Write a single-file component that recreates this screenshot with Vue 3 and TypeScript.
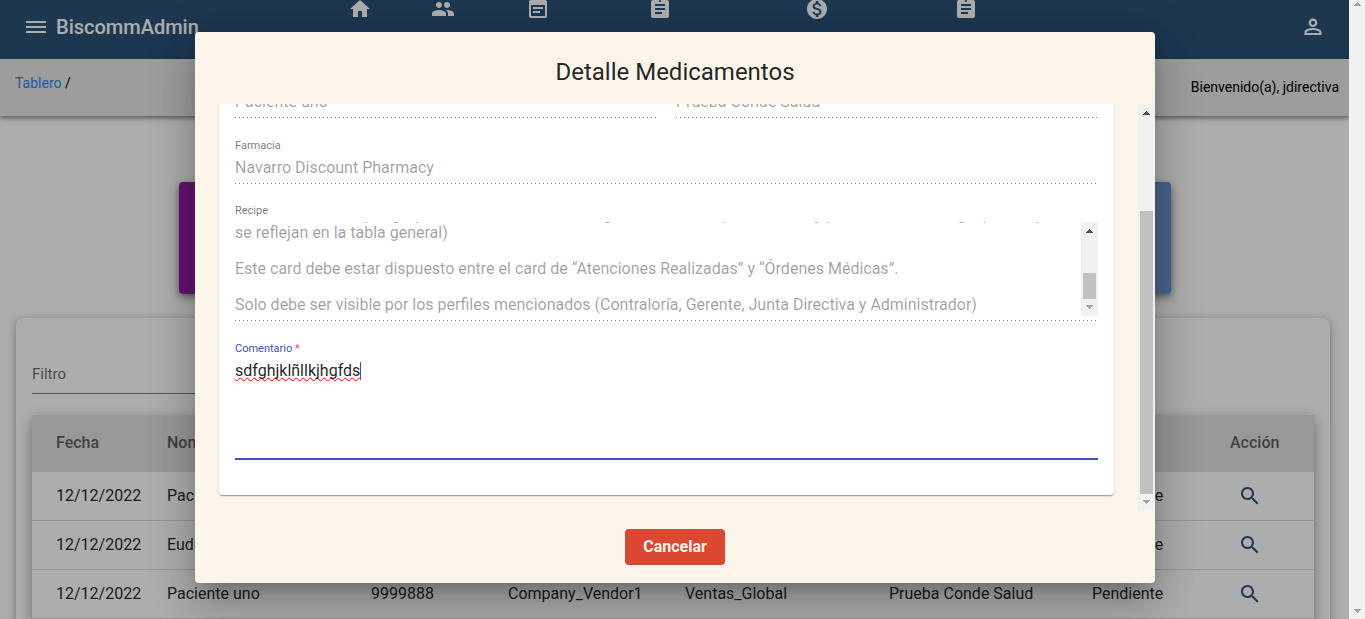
<script setup lang="ts">
import { computed, nextTick, onMounted, ref } from 'vue'

interface NavItem { name: string; path: string }
interface Order {
  date: string
  patient: string
  code: string
  company: string
  group: string
  plan: string
  status: string
}

const clipboard = 'M19 3h-4.18C14.4 1.84 13.3 1 12 1c-1.3 0-2.4.84-2.82 2H5c-1.1 0-2 .9-2 2v14c0 1.1.9 2 2 2h14c1.1 0 2-.9 2-2V5c0-1.100-.9-2-2-2zm-7 0c.55 0 1 .45 1 1s-.45 1-1 1-1-.45-1-1 .45-1 1-1zm2 14H7v-2h7v2zm3-4H7v-2h10v2zm0-4H7V7h10v2z'

const navItems: NavItem[] = [
  { name: 'Inicio', path: 'M10 20v-6h4v6h5v-8h3L12 3 2 12h3v8z' },
  { name: 'Usuarios', path: 'M16 11c1.66 0 2.990-1.340 2.990-3S17.660 5 16 5c-1.660 0-3 1.340-3 3s1.340 3 3 3zm-8 0c1.660 0 2.990-1.340 2.990-3S9.660 5 8 5C6.340 5 5 6.340 5 8s1.340 3 3 3zm0 2c-2.330 0-7 1.170-7 3.500V19h14v-2.500c0-2.330-4.670-3.500-7-3.500zm8 0c-.290 0-.620.020-.970.050 1.160.840 1.970 1.970 1.970 3.450V19h6v-2.500c0-2.330-4.670-3.500-7-3.500z' },
  { name: 'Citas', path: 'M17 10H7v2h10v-2zm2-7h-1V1h-2v2H8V1H6v2H5c-1.110 0-2 .9-2 2v14c0 1.100.890 2 2 2h14c1.100 0 2-.9 2-2V5c0-1.100-.9-2-2-2zm0 16H5V8h14v11zm-5-5H7v2h7v-2z' },
  { name: 'Atenciones', path: clipboard },
  { name: 'Pagos', path: 'M12 2C6.480 2 2 6.480 2 12s4.480 10 10 10 10-4.480 10-10S17.520 2 12 2zm1.410 16.090V20h-2.670v-1.930c-1.710-.360-3.160-1.460-3.270-3.400h1.960c.1 1.050.820 1.870 2.650 1.870 1.960 0 2.400-.980 2.400-1.590 0-.830-.440-1.610-2.670-2.140-2.480-.6-4.180-1.620-4.180-3.670 0-1.720 1.390-2.840 3.110-3.210V4h2.670v1.950c1.860.450 2.790 1.860 2.850 3.390H14.300c-.050-1.110-.640-1.870-2.220-1.870-1.500 0-2.400.680-2.400 1.640 0 .840.650 1.390 2.670 1.910s4.180 1.390 4.180 3.910c-.010 1.830-1.380 2.830-3.120 3.160z' },
  { name: 'Reportes', path: clipboard },
]

const headings = ['Fecha', 'Nombre', 'Código', 'Compañía', 'Grupo', 'Plan', 'Estatus', 'Acción']

function order(patient: string): Order {
  return {
    date: '12/12/2022',
    patient,
    code: '9999888',
    company: 'Company_Vendor1',
    group: 'Ventas_Global',
    plan: 'Prueba Conde Salud',
    status: 'Pendiente',
  }
}
const orders = [order('Paciente uno'), order('Eudis'), order('Paciente uno')]

const recipe = [
  'Card para la contraloría.',
  'Se debe agregar un card de medicamentos en el tablero principal.',
  '',
  'El card debe mostrar el total de los medicamentos pendientes.',
  'Al seleccionar el card se despliega la tabla con el detalle.',
  '',
  'Esta tabla se verá por grupo, desde cada vista del registro con datos por estados, y para el total de cargo, por el tipo',
  'se reflejan en la tabla general)',
  '',
  'Este card debe estar dispuesto entre el card de “Atenciones Realizadas” y “Órdenes Médicas”.',
  '',
  'Solo debe ser visible por los perfiles mencionados (Contraloría, Gerente, Junta Directiva y Administrador)',
].join('\n')

const comment = ref('sdfghjklñllkjhgfds')
const recipeBox = ref<HTMLTextAreaElement | null>(null)
const ready = ref(false)

const caretX = computed(() => {
  if (!ready.value) return 0
  const context = document.createElement('canvas').getContext('2d')
  if (!context) return 0
  context.font = '16px Roboto'
  return Math.round(context.measureText(comment.value).width)
})

onMounted(async () => {
  await nextTick()
  ready.value = true
  if (recipeBox.value) recipeBox.value.scrollTop = recipeBox.value.scrollHeight
})
</script>

<template>
  <div class="window">
    <div class="page">
      <header class="toolbar">
        <div class="brand">
          <button class="icon-button" type="button" aria-label="Menú">
            <svg viewBox="0 0 24 24"><path d="M2 6h20v2H2zm0 5h20v2H2zm0 5h20v2H2z" /></svg>
          </button>
          <span class="brand-name">BiscommAdmin</span>
        </div>
        <nav class="nav">
          <button v-for="item in navItems" :key="item.name" class="nav-item" type="button" :aria-label="item.name">
            <svg viewBox="0 0 24 24"><path :d="item.path" /></svg>
          </button>
        </nav>
        <button class="icon-button account" type="button" aria-label="Cuenta">
          <svg viewBox="0 0 24 24"><path fill-rule="evenodd" d="M12 3.500a4.300 4.300 0 1 1 0 8.600 4.300 4.300 0 0 1 0-8.600zm0 2.200a2.100 2.100 0 1 0 0 4.200 2.100 2.100 0 0 0 0-4.200zM12 13c-2.700 0-8.500 1.300-8.500 4v3h17v-3c0-2.700-5.800-4-8.500-4zm0 2.100c2.800 0 6.100 1.200 6.400 2.100v.7H5.600v-.7c.3-.9 3.600-2.100 6.400-2.100z" /></svg>
        </button>
      </header>

      <div class="subbar">
        <div class="crumbs"><a href="#">Tablero</a> /</div>
        <div class="welcome">Bienvenido(a), jdirectiva</div>
      </div>

      <section class="tiles">
        <div class="tile purple"></div>
        <div class="tile blue"></div>
      </section>

      <main class="panel">
        <input class="filter" type="text" placeholder="Filtro" aria-label="Filtro" />
        <table class="orders">
          <colgroup>
            <col class="c-date" /><col class="c-patient" /><col class="c-code" /><col class="c-company" />
            <col class="c-group" /><col class="c-plan" /><col class="c-status" /><col class="c-action" />
          </colgroup>
          <thead>
            <tr><th v-for="heading in headings" :key="heading">{{ heading }}</th></tr>
          </thead>
          <tbody>
            <tr v-for="(row, index) in orders" :key="index">
              <td>{{ row.date }}</td>
              <td>{{ row.patient }}</td>
              <td>{{ row.code }}</td>
              <td>{{ row.company }}</td>
              <td>{{ row.group }}</td>
              <td>{{ row.plan }}</td>
              <td>{{ row.status }}</td>
              <td>
                <button class="search" type="button" aria-label="Ver detalle">
                  <svg viewBox="0 0 24 24"><path d="M15.500 14h-.790l-.280-.270C15.410 12.590 16 11.110 16 9.500 16 5.910 13.090 3 9.500 3S3 5.910 3 9.500 5.910 16 9.500 16c1.610 0 3.090-.590 4.230-1.570l.270.280v.790l5 4.990L20.490 19l-4.990-5zm-6 0C7.010 14 5 11.990 5 9.500S7.010 5 9.500 5 14 7.010 14 9.500 11.990 14 9.500 14z" /></svg>
                </button>
              </td>
            </tr>
          </tbody>
        </table>
      </main>
    </div>

    <div class="backdrop">
      <div class="dialog" role="dialog" aria-modal="true" aria-labelledby="dialog-title">
        <h1 id="dialog-title" class="dialog-title">Detalle Medicamentos</h1>
        <div class="dialog-body">
          <div class="scroll-area">
            <form class="card" @submit.prevent>
              <div class="pair">
                <div class="field">
                  <label for="patient">Paciente</label>
                  <input id="patient" type="text" value="Paciente uno" disabled />
                </div>
                <div class="field">
                  <label for="plan">Plan</label>
                  <input id="plan" type="text" value="Prueba Conde Salud" disabled />
                </div>
              </div>
              <div class="field">
                <label for="pharmacy">Farmacia</label>
                <input id="pharmacy" type="text" value="Navarro Discount Pharmacy" disabled />
              </div>
              <div class="field area">
                <label for="recipe">Recipe</label>
                <div class="recipe-row">
                  <textarea id="recipe" ref="recipeBox" :value="recipe" disabled></textarea>
                  <div class="scrollbar">
                    <svg class="arrow dark" viewBox="0 0 7 4"><path d="M3 0h1v1h1v1h1v1h1v1H0V3h1V2h1V1h1z" /></svg>
                    <div class="track recipe-track"><div class="thumb"></div></div>
                    <svg class="arrow" viewBox="0 0 7 4"><path d="M0 0h7v1H6v1H5v1H4v1H3V3H2V2H1V1H0z" /></svg>
                  </div>
                </div>
              </div>
              <div class="field active">
                <label for="comment">Comentario <span class="required">*</span></label>
                <div class="comment-row">
                  <textarea id="comment" v-model="comment" spellcheck="false" required></textarea>
                  <span class="caret" :style="{ left: caretX + 'px' }"></span>
                </div>
              </div>
            </form>
          </div>
          <div class="scrollbar">
            <svg class="arrow dark" viewBox="0 0 7 4"><path d="M3 0h1v1h1v1h1v1h1v1H0V3h1V2h1V1h1z" /></svg>
            <div class="track body-track"><div class="thumb"></div></div>
            <svg class="arrow" viewBox="0 0 7 4"><path d="M0 0h7v1H6v1H5v1H4v1H3V3H2V2H1V1H0z" /></svg>
          </div>
        </div>
        <div class="dialog-actions">
          <button class="cancel" type="button">Cancelar</button>
        </div>
      </div>
    </div>

    <div class="scrollbar page-scrollbar">
      <svg class="arrow" viewBox="0 0 7 4"><path d="M3 0h1v1h1v1h1v1h1v1H0V3h1V2h1V1h1z" /></svg>
      <div class="track"></div>
      <svg class="arrow" viewBox="0 0 7 4"><path d="M0 0h7v1H6v1H5v1H4v1H3V3H2V2H1V1H0z" /></svg>
    </div>
  </div>
</template>

<style>
body {
  margin: 0;
  overflow: hidden;
}
</style>

<style scoped>
.window {
  position: relative;
  height: 100vh;
  overflow: hidden;
  background: #fff;
  color: rgba(0, 0, 0, 0.87);
  font-family: Roboto, "Liberation Sans", sans-serif;
  font-size: 16px;
}
.window *,
.window *::before {
  box-sizing: border-box;
}
button,
input,
textarea {
  margin: 0;
  padding: 0;
  border: 0;
  border-radius: 0;
  outline: 0;
  background: none;
  color: inherit;
  font: inherit;
}
svg {
  display: block;
  width: 24px;
  height: 24px;
  fill: currentColor;
}
.page {
  margin-right: 16px;
}

.toolbar {
  display: flex;
  align-items: center;
  height: 59px;
  padding: 0 24px 5px;
  background: #2c5278;
  color: #fff;
}
.brand {
  display: flex;
  align-items: center;
  gap: 8px;
  width: 298px;
}
.brand-name {
  font-size: 20px;
  font-weight: 500;
  line-height: 24px;
}
.nav {
  display: grid;
  grid-template-columns: 76px 90px 100px 144px 170px 128px;
  height: 60px;
}
.nav-item {
  display: flex;
  justify-content: center;
  align-items: flex-start;
}
.account {
  margin-left: auto;
}

.subbar {
  position: relative;
  display: flex;
  justify-content: space-between;
  height: 57px;
  padding: 15px 10px 0 15px;
  background: #e7e7e7;
  box-shadow: 0 2px 5px rgba(0, 0, 0, 0.5);
  color: #000;
  font-size: 14px;
  line-height: 18px;
}
.crumbs a {
  color: #2a86f5;
  text-decoration: none;
}
.welcome {
  padding-top: 4px;
}

.tiles {
  display: flex;
  justify-content: space-between;
  padding: 66px 178px 24px 179px;
}
.tile {
  width: 230px;
  height: 112px;
  border-radius: 4px;
  box-shadow: 0 3px 8px rgba(0, 0, 0, 0.5);
}
.purple {
  background: #931da2;
}
.blue {
  background: #6d92d2;
}

.panel {
  margin: 0 19px 0 16px;
  height: 400px;
  padding: 36px 16px 16px;
  border-radius: 8px;
  box-shadow: 0 2px 8px rgba(0, 0, 0, 0.36);
}
.filter {
  display: block;
  width: 50%;
  height: 40px;
  border-bottom: 1px solid rgba(0, 0, 0, 0.5);
  font-size: 15px;
}
.filter::placeholder {
  color: rgba(0, 0, 0, 0.6);
  opacity: 1;
}
.orders {
  width: 100%;
  margin-top: 21px;
  border-collapse: separate;
  border-spacing: 0;
  table-layout: fixed;
  box-shadow: 0 5px 12px rgba(0, 0, 0, 0.4);
}
.c-date { width: 135px; }
.c-patient { width: 204px; }
.c-code { width: 137px; }
.c-company { width: 177px; }
.c-group { width: 204px; }
.c-plan { width: 203px; }
.c-status { width: 138px; }
.c-action { width: 84px; }
.orders th {
  height: 57px;
  padding: 0 0 2px;
  background: #e1e1e1;
  color: rgba(0, 0, 0, 0.6);
  font-weight: 500;
  text-align: left;
}
.orders td {
  height: 49px;
  padding: 0 0 2px;
  border-bottom: 1px solid #dcdcdc;
  background: #fff;
  white-space: nowrap;
}
.orders th:first-child,
.orders td:first-child {
  padding-left: 24px;
}
.orders td:last-child {
  padding-bottom: 0;
}
.search {
  display: block;
  margin-left: 8px;
  color: #2c5278;
}

.backdrop {
  position: absolute;
  inset: 0 15px 0 0;
  display: flex;
  justify-content: center;
  padding: 32px 24px 36px;
  background: rgba(0, 0, 0, 0.32);
}
.dialog {
  display: flex;
  flex-direction: column;
  width: 100%;
  max-width: 960px;
  border-radius: 4px;
  background: #fcf5e9;
  box-shadow:
    0 11px 15px -7px rgba(0, 0, 0, 0.2),
    0 24px 38px 3px rgba(0, 0, 0, 0.14),
    0 9px 46px 8px rgba(0, 0, 0, 0.12);
}
.dialog-title {
  margin: 0;
  padding: 24px 24px 16px;
  font-size: 24px;
  font-weight: 400;
  line-height: 32px;
  text-align: center;
}
.dialog-body {
  display: flex;
  flex: 1;
  min-height: 0;
}
.scroll-area {
  display: flex;
  flex: 1;
  flex-direction: column;
  justify-content: flex-end;
  min-width: 0;
  overflow: hidden;
  padding: 0 24px 16px;
}
.card {
  flex: none;
  padding: 16px 16px 35px;
  border-radius: 4px;
  background: #fff;
  box-shadow:
    0 2px 1px -1px rgba(0, 0, 0, 0.2),
    0 1px 1px rgba(0, 0, 0, 0.14),
    0 1px 3px rgba(0, 0, 0, 0.12);
}
.pair {
  display: grid;
  grid-template-columns: 1fr 1fr;
  gap: 19px;
}
.field {
  position: relative;
  display: flex;
  flex-direction: column;
  margin-top: 19px;
  padding-bottom: 7px;
}
.field::before {
  content: "";
  position: absolute;
  inset: auto 0 0;
  height: 1px;
  background: repeating-linear-gradient(to right, rgba(0, 0, 0, 0.46) 0 1px, transparent 1px 4px);
}
.field label {
  margin-bottom: 4px;
  color: rgba(0, 0, 0, 0.54);
  font-size: 11px;
  line-height: 18px;
}
.field input {
  width: 100%;
  height: 18px;
  color: rgba(0, 0, 0, 0.38);
  line-height: 18px;
}
.area {
  margin-top: 18px;
  padding-bottom: 5px;
}
.recipe-row {
  display: flex;
  height: 94px;
  margin-top: -2px;
}
.recipe-row textarea {
  flex: 1;
  min-width: 0;
  padding: 2px 0;
  overflow: hidden;
  resize: none;
  color: rgba(0, 0, 0, 0.38);
  line-height: 18px;
}
.active {
  padding-bottom: 2px;
}
.active::before {
  height: 2px;
  background: #3f51b5;
}
.active label {
  color: #3f51b5;
}
.required {
  color: #ff4081;
}
.comment-row {
  position: relative;
  height: 96px;
}
.comment-row textarea {
  display: block;
  width: 100%;
  height: 100%;
  overflow: hidden;
  resize: none;
  line-height: 18px;
  text-decoration: underline wavy #f00 1px;
  text-decoration-skip-ink: none;
}
.caret {
  position: absolute;
  top: 0;
  width: 1px;
  height: 18px;
  background: #3f51b5;
}

.scrollbar {
  display: flex;
  flex-direction: column;
  align-items: center;
  flex: none;
  width: 17px;
  padding: 7px 2px 7px;
  background: #f1f1f1;
  color: #a3a3a3;
}
.arrow {
  width: 7px;
  height: 4px;
}
.dark {
  color: #505050;
}
.track {
  display: flex;
  flex: 1;
  flex-direction: column;
  justify-content: flex-end;
  width: 13px;
  margin: 6px 0;
}
.thumb {
  background: #c1c1c1;
}
.recipe-track .thumb {
  height: 26px;
}
.body-track .thumb {
  height: 76%;
}
.page-scrollbar {
  position: absolute;
  inset: 0 0 0 auto;
  width: 16px;
  padding-top: 2px;
  padding-bottom: 6px;
}

.dialog-actions {
  display: flex;
  justify-content: center;
  padding: 18px 24px;
}
.cancel {
  width: 100px;
  height: 36px;
  padding-bottom: 2px;
  border-radius: 4px;
  background: #da4733;
  color: #fcf5e9;
  font-weight: 700;
}
</style>
